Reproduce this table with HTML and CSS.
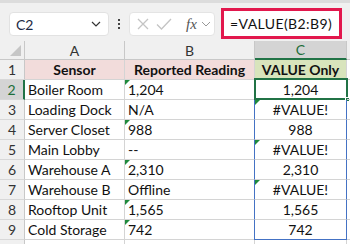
FILE: index.html
```html
<!DOCTYPE html>
<html>
<head>
<meta charset="utf-8">
<link rel="stylesheet" href="styles.css">
</head>
<body>
<div class="topstrip"></div>
<div class="fbar">
  <div class="namebox"><span>C2</span>
    <svg class="chev" width="10" height="6" viewBox="0 0 10 6"><path d="M1 1 L5 5 L9 1" fill="none" stroke="#333" stroke-width="1.2"/></svg>
  </div>
  <div class="dots"><i></i><i></i><i></i></div>
  <div class="fxbox">
    <svg width="14" height="14" viewBox="0 0 14 14"><path d="M2 2 L12 12 M12 2 L2 12" stroke="#c4c4c4" stroke-width="1.3" fill="none"/></svg>
    <svg width="16" height="14" viewBox="0 0 16 14"><path d="M1 7.5 L5.5 12 L15 2" stroke="#c4c4c4" stroke-width="1.3" fill="none"/></svg>
    <span class="fx">fx</span>
    <svg width="10" height="6" viewBox="0 0 10 6"><path d="M1 1 L5 5 L9 1" fill="none" stroke="#999" stroke-width="1"/></svg>
  </div>
  <div class="formula">=VALUE(B2:B9)</div>
</div>
<div class="sheet">
  <div class="ch corner"><span class="tri"></span></div>
  <div class="ch">A</div>
  <div class="ch">B</div>
  <div class="ch selcol">C</div>
  <div class="ch end"></div>

  <div class="rh">1</div>
  <div class="c hd pink">Sensor</div>
  <div class="c hd pink">Reported Reading</div>
  <div class="c hd green colc">VALUE Only</div>
  <div class="c e"></div>

  <div class="rh selrow">2</div>
  <div class="c">Boiler Room</div>
  <div class="c flag">1,204</div>
  <div class="c ctr colc active">1,204<span class="sel"><b></b></span></div>
  <div class="c e"></div>

  <div class="rh">3</div>
  <div class="c">Loading Dock</div>
  <div class="c">N/A</div>
  <div class="c ctr colc flag">#VALUE!</div>
  <div class="c e"></div>

  <div class="rh">4</div>
  <div class="c">Server Closet</div>
  <div class="c flag">988</div>
  <div class="c ctr colc">988</div>
  <div class="c e"></div>

  <div class="rh">5</div>
  <div class="c">Main Lobby</div>
  <div class="c">--</div>
  <div class="c ctr colc flag">#VALUE!</div>
  <div class="c e"></div>

  <div class="rh">6</div>
  <div class="c">Warehouse A</div>
  <div class="c flag">2,310</div>
  <div class="c ctr colc">2,310</div>
  <div class="c e"></div>

  <div class="rh">7</div>
  <div class="c">Warehouse B</div>
  <div class="c">Offline</div>
  <div class="c ctr colc flag">#VALUE!</div>
  <div class="c e"></div>

  <div class="rh">8</div>
  <div class="c">Rooftop Unit</div>
  <div class="c flag">1,565</div>
  <div class="c ctr colc">1,565</div>
  <div class="c e"></div>

  <div class="rh">9</div>
  <div class="c">Cold Storage</div>
  <div class="c flag">742</div>
  <div class="c ctr colc last">742</div>
  <div class="c e"></div>

  <div class="rh"></div>
  <div class="c"></div>
  <div class="c"></div>
  <div class="c"></div>
  <div class="c e"></div>
</div>
</body>
</html>
```
FILE: styles.css
```css
* { box-sizing: border-box; }
html, body { height: 244px; overflow: hidden; }
body {
  margin: 0;
  width: 350px;
  background: #f0f0f0;
  font-family: Lato, "Liberation Sans", sans-serif;
  color: #111;
}
.topstrip {
  height: 3px;
  background: #dcdcdc;
}
.fbar {
  height: 38px;
  display: flex;
  align-items: center;
  padding-left: 9px;
}
.namebox {
  width: 100px;
  height: 24px;
  background: #fff;
  border: 1px solid #e2e2e2;
  border-radius: 4px;
  display: flex;
  align-items: center;
  justify-content: space-between;
  padding: 0 7px 0 6px;
  font-size: 14px;
  color: #1c2a44;
  margin-top: 4px;
}
.dots {
  width: 20px;
  display: flex;
  flex-direction: column;
  align-items: center;
  gap: 2px;
  margin-top: 4px;
}
.dots i {
  width: 2px;
  height: 2px;
  background: #444;
  display: block;
}
.fxbox {
  width: 86px;
  height: 24px;
  background: #fff;
  border: 1px solid #e4e4e4;
  border-radius: 4px;
  display: flex;
  align-items: center;
  padding-left: 6px;
  gap: 6px;
  margin-top: 4px;
}
.fx {
  font-family: "Liberation Serif", serif;
  font-style: italic;
  font-size: 15px;
  color: #555;
  margin-left: 8px;
  margin-right: -2px;
}
.formula {
  margin-left: 6px;
  width: 121px;
  height: 31px;
  border: 3px solid #e2184d;
  background: #fff;
  font-size: 14px;
  letter-spacing: 0.4px;
  padding-left: 6px;
  line-height: 25px;
  white-space: nowrap;
  overflow: hidden;
  margin-top: 2px;
}
.sheet {
  display: grid;
  grid-template-columns: 25px 100px 130px 92px 20px;
  grid-template-rows: 19px repeat(10, 20px);
  height: 203px;
  overflow: hidden;
  background: #fff;
}
.ch {
  background: #f0f0f0;
  border-right: 1px solid #c8c8c8;
  border-bottom: 1px solid #c8c8c8;
  font-size: 14px;
  color: #333;
  display: flex;
  align-items: center;
  justify-content: center;
  position: relative;
}
.ch.end { border-right: none; }
.tri {
  position: absolute;
  right: 3px;
  bottom: 3px;
  width: 0;
  height: 0;
  border-left: 11px solid transparent;
  border-bottom: 11px solid #c6c6c6;
}
.selcol {
  background: #d4d4d4;
  color: #1e6e3a;
  border-bottom: 2px solid #217346;
}
.rh {
  background: #f0f0f0;
  border-right: 1px solid #c8c8c8;
  border-bottom: 1px solid #d8d8d8;
  font-size: 14px;
  color: #333;
  display: flex;
  align-items: center;
  justify-content: center;
}
.selrow {
  background: #d4d4d4;
  color: #1e6e3a;
  border-right: 2px solid #217346;
}
.c {
  border-right: 1px solid #d4d4d4;
  border-bottom: 1px solid #d4d4d4;
  font-size: 14px;
  padding-left: 3px;
  line-height: 19px;
  white-space: nowrap;
  position: relative;
}
.c.e { border-right: none; }
.hd {
  font-weight: bold;
  text-align: center;
  padding-left: 0;
}
.pink { background: #f2dcdb; }
.green { background: #d8e4bc; }
.ctr { text-align: center; padding-left: 0; }
.colc {
  border-left: 1px solid #4472c4;
  border-right: 1px solid #4472c4;
  margin-left: -1px;
}
.green.colc { border-left: 1px solid #d4d4d4; border-right: 1px solid #d4d4d4; }
.last { border-bottom: 1px solid #4472c4; }
.flag::before {
  content: "";
  position: absolute;
  left: 0;
  top: 0;
  width: 0;
  height: 0;
  border-top: 5px solid #1f8a3c;
  border-right: 5px solid transparent;
}
.sel {
  position: absolute;
  left: -1px;
  top: -2px;
  right: -2px;
  bottom: -1px;
  border: 2px solid #217346;
}
.sel b {
  position: absolute;
  right: -4px;
  bottom: -4px;
  width: 5px;
  height: 5px;
  background: #217346;
  border: 1px solid #fff;
}
```
